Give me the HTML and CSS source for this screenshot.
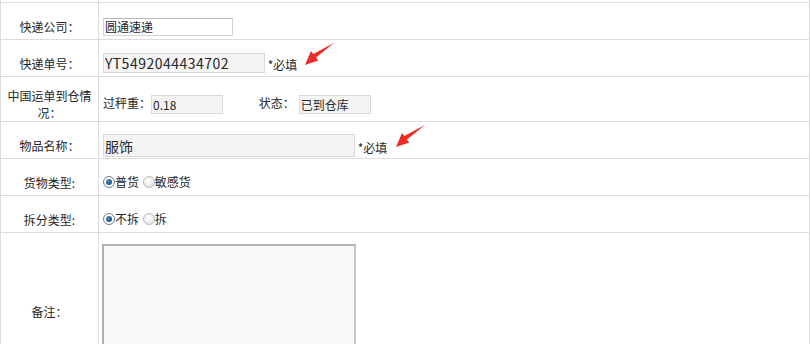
FILE: index.html
```html
<!DOCTYPE html>
<html lang="zh-CN">
<head>
<meta charset="UTF-8">
<title>订单信息</title>
<link rel="stylesheet" href="styles.css">
</head>
<body>

<div class="form-wrap">
<table class="form-table">
<tr class="row-cut">
<td class="label"></td>
<td class="value"></td>
</tr>
<tr>
<td class="label">快递公司<span class="colon">：</span></td>
<td class="value"><input class="txt txt-company" type="text" value="圆通速递"></td>
</tr>
<tr>
<td class="label">快递单号<span class="colon">：</span></td>
<td class="value"><input class="txt txt-big txt-no" type="text" value="YT5492044434702"> <span class="req">*必填</span></td>
</tr>
<tr>
<td class="label label-wrap">中国运单到仓情况<span class="colon">：</span></td>
<td class="value">
<span class="field">过秤重<span class="colon">：</span><input class="txt txt-small" type="text" value="0.18" readonly></span>
<span class="field field-status">状态<span class="colon">：</span><input class="txt txt-small" type="text" value="已到仓库" readonly></span>
</td>
</tr>
<tr>
<td class="label">物品名称<span class="colon">：</span></td>
<td class="value"><input class="txt txt-big txt-name" type="text" value="服饰"> <span class="req">*必填</span></td>
</tr>
<tr>
<td class="label">货物类型:</td>
<td class="value">
<label class="opt"><span class="radio checked"></span>普货</label>
<label class="opt"><span class="radio"></span>敏感货</label>
</td>
</tr>
<tr>
<td class="label">拆分类型:</td>
<td class="value">
<label class="opt"><span class="radio checked"></span>不拆</label>
<label class="opt"><span class="radio"></span>拆</label>
</td>
</tr>
<tr class="row-note">
<td class="label">备注<span class="colon">：</span></td>
<td class="value value-top"><textarea class="note"></textarea></td>
</tr>
</table>

<!-- red hint arrows -->
<svg class="arrow arrow-1" width="32" height="25" viewBox="-1 -1 32 25">
<polygon points="0,22 6,8 8.3,11 29.3,-0.3 10.9,14.5 13.2,17.5" fill="#ee2a24"/>
</svg>
<svg class="arrow arrow-2" width="32" height="25" viewBox="-1 -1 32 25">
<polygon points="0,22 6,8 8.3,11 29.3,-0.3 10.9,14.5 13.2,17.5" fill="#ee2a24"/>
</svg>
</div>

</body>
</html>
```

FILE: styles.css
```css
/* Reset */
* {
margin: 0;
padding: 0;
box-sizing: border-box;
}

body {
background-color: #ffffff;
color: #262626;
font-family: "Noto Sans CJK SC", "Microsoft YaHei", sans-serif;
font-size: 12px;
}

/* full-width colon sits centred like in YaHei */
.colon {
font-family: "Noto Sans CJK TC", sans-serif;
}

.form-wrap {
position: relative;
width: 810px;
}

/* Table */
.form-table {
width: 810px;
border-collapse: collapse;
table-layout: fixed;
}

.form-table td {
border: 1px solid #dcdcdc;
height: 37px;
padding-top: 12px;
vertical-align: middle;
line-height: 16px;
}

.form-table .row-cut td {
height: 2px;
padding: 0;
border-top: none;
}

.label {
width: 98px;
text-align: center;
padding: 0 4px;
}

.label-wrap {
line-height: 17px !important;
padding-top: 10px !important;
}

.value {
padding-left: 4px;
white-space: nowrap;
}

/* Inputs */
.txt {
font-family: inherit;
font-size: 12px;
color: #262626;
height: 18px;
padding: 0 1px;
border: 1px solid #d4d4d4;
border-top-color: #b8b8b8;
background-color: #fff;
vertical-align: middle;
outline: none;
}

.txt-company {
width: 130px;
}

.txt-big {
font-size: 14px;
background-color: #f4f4f4;
border-color: #d8d8d8;
}

.txt-no {
width: 162px;
height: 20px;
letter-spacing: 0.5px;
}

.txt-name {
width: 252px;
height: 23px;
}

.txt-small {
width: 72px;
height: 19px;
background-color: #f4f4f4;
border-color: #d8d8d8;
}

.req {
vertical-align: -4px;
}

.field-status {
margin-left: 33px;
}

.field-status .txt {
margin-left: 4px;
}

/* Radios */
.opt {
display: inline-flex;
align-items: center;
margin-right: 1px;
}

.radio {
display: inline-block;
width: 12px;
height: 12px;
border-radius: 50%;
border: 1px solid #b9b9b9;
background: radial-gradient(circle at 40% 35%, #ffffff, #dedede);
position: relative;
}

.radio.checked {
border-color: #6f8091;
background: radial-gradient(circle at 50% 50%, #fff 60%, #e2e2e2);
}

.radio.checked::after {
content: "";
position: absolute;
left: 2px;
top: 2px;
width: 6px;
height: 6px;
border-radius: 50%;
background: radial-gradient(circle at 35% 30%, #4f8fc4, #123a62);
}

/* Note */
.form-table .row-note td {
height: 147px;
}

.form-table .row-note .value-top {
vertical-align: top;
padding-top: 11px;
}

.note {
display: block;
width: 254px;
height: 132px;
margin-left: -1px;
border: 2px solid #b0b0b0;
border-right-color: #c4c4c4;
border-bottom-color: #c4c4c4;
background-color: #f8f8f8;
resize: none;
}

/* Arrows */
.arrow {
position: absolute;
}

.arrow-1 {
left: 304px;
top: 42px;
}

.arrow-2 {
left: 395px;
top: 124px;
}
```
